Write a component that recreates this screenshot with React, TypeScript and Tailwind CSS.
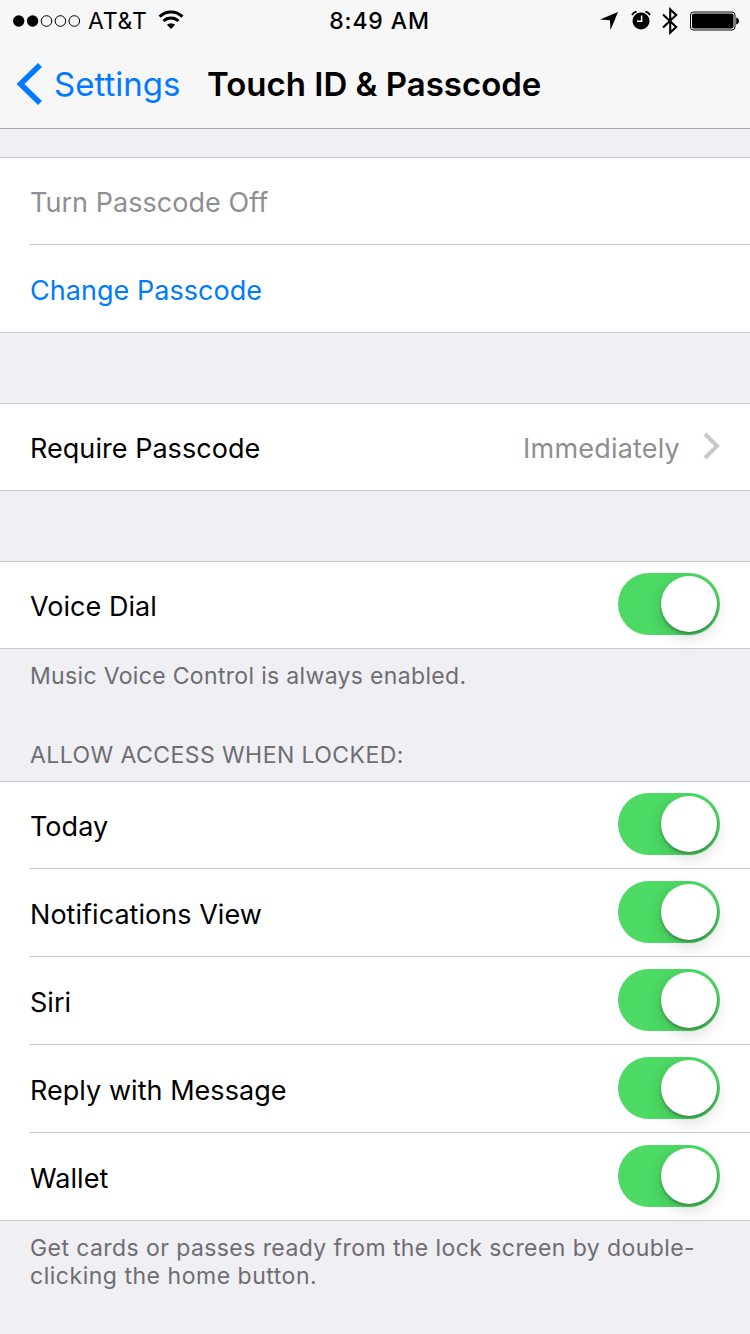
import { useState } from "react";
import type { ReactNode } from "react";
import clsx from "clsx";

const accessItems = ["Today", "Notifications View", "Siri", "Reply with Message", "Wallet"];

function StatusBar() {
  return (
    <div className="flex h-[41px] items-center justify-between text-[23px]">
      <div className="flex flex-1 items-center pl-3">
        <svg width="70" height="14" viewBox="0 0 70 14">
          <circle cx="6.7" cy="7" r="5.7" />
          <circle cx="20.6" cy="7" r="5.7" />
          <g fill="none" stroke="black" strokeWidth="1">
            <circle cx="34.5" cy="7" r="5.3" />
            <circle cx="48.4" cy="7" r="5.3" />
            <circle cx="62.3" cy="7" r="5.3" />
          </g>
        </svg>
        <span className="ml-[6px] w-[70px] pt-[1px] tracking-[0.8px] whitespace-nowrap">AT&amp;T</span>
        <svg className="-mt-[1px]" width="26" height="20" viewBox="0 0 26 20" fill="none" stroke="black">
          <path d="M1.6 6.6a16.2 16.2 0 0 1 22.8 0" strokeWidth="3" />
          <path d="M5.5 11a10.8 10.8 0 0 1 15 0" strokeWidth="2.9" />
          <path d="M13 19l-4.1-4.2a6 6 0 0 1 8.2 0z" fill="black" stroke="none" />
        </svg>
      </div>
      <div className="pt-[1px] pl-[7px] font-medium tracking-[0.9px]">8:49 AM</div>
      <div className="flex flex-1 items-center justify-end pr-[10px]">
        <svg className="mt-[1px]" width="18" height="18" viewBox="0 0 18 18">
          <path d="M18 0L10.5 18L9.9 8.3L0 7.4z" />
        </svg>
        <svg className="-mt-[1px] ml-[13px]" width="20" height="20" viewBox="0 0 20 20">
          <circle cx="10" cy="11" r="8.5" />
          <path d="M1 5.2Q2.5 2 5.6 1.6M19 5.2Q17.5 2 14.4 1.6" fill="none" stroke="black" strokeWidth="1.7" />
          <path d="M10.6 5.5v5.8h-4.6" fill="none" stroke="white" strokeWidth="1.5" />
        </svg>
        <svg className="ml-[11px]" width="16" height="28" viewBox="0 0 16 28" fill="none" stroke="black" strokeWidth="2.1">
          <path d="M1 7.5L14.2 20L8.2 25.5V2.5L14.2 8L1 20.5" />
        </svg>
        <svg className="ml-[12px]" width="50" height="20" viewBox="0 0 50 20">
          <rect x="0.5" y="1" width="44.5" height="18" rx="3" fill="none" stroke="black" strokeWidth="1" />
          <rect x="2" y="2.5" width="41.5" height="15" rx="1.8" />
          <path d="M46.2 6.5a3.6 3.6 0 0 1 0 7z" />
        </svg>
      </div>
    </div>
  );
}

function Switch({ label }: { label: string }) {
  const [on, setOn] = useState(true);

  return (
    <button
      role="switch"
      aria-checked={on}
      aria-label={label}
      onClick={() => setOn(!on)}
      className={clsx(
        "mb-[13px] flex h-[62px] w-[102px] shrink-0 items-center rounded-full p-[3px]",
        on ? "justify-end bg-[#4cd964]" : "justify-start bg-[#e5e5e5]"
      )}
    >
      <span className="size-14 rounded-full bg-white shadow-[0_6px_16px_rgba(0,0,0,0.15),0_2px_3px_rgba(0,0,0,0.3)]" />
    </button>
  );
}

function Group({ children }: { children: ReactNode }) {
  return <div className="border-y border-[#c8c7cc] bg-white">{children}</div>;
}

// Content sits on the bottom edge, so the shorter first row keeps the same baseline
function Row({ children }: { children: ReactNode }) {
  return (
    <div className="group pl-[30px]">
      <div className="flex h-[88px] items-end justify-between border-b border-[#c8c7cc] pr-[30px] leading-[83px] tracking-[0.04px] group-first:h-[87px] group-last:h-[87px] group-last:border-b-0 group-only:h-[86px]">
        {children}
      </div>
    </div>
  );
}

export default function App() {
  return (
    <div className="h-[1334px] w-[750px] overflow-hidden bg-[#efeff4] font-['Inter','Liberation_Sans',sans-serif] text-[27px] text-black">
      <header className="h-[129px] border-b border-[#a7a7aa] bg-[#f7f7f8]">
        <StatusBar />
        <div className="flex h-[87px] items-center pl-4 text-[33px]">
          <button className="flex items-center text-[#007aff]">
            <svg className="-mt-[2px]" width="27" height="42" viewBox="0 0 27 42" fill="none" stroke="currentColor" strokeWidth="5.5">
              <path d="M24 2L4.5 21L24 40" />
            </svg>
            <span className="ml-[11px] w-[126px] text-left whitespace-nowrap">Settings</span>
          </button>
          <h1 className="ml-[27px] font-semibold whitespace-nowrap">Touch ID &amp; Passcode</h1>
        </div>
      </header>

      <main className="pt-7">
        <Group>
          <Row>
            <span className="text-[#8e8e93]">Turn Passcode Off</span>
          </Row>
          <Row>
            <span className="text-[#007aff]">Change Passcode</span>
          </Row>
        </Group>

        <div className="mt-[70px]">
          <Group>
            <Row>
              <span>Require Passcode</span>
              <span className="flex items-center text-[#8e8e93]">
                <span className="tracking-[0.2px]">Immediately</span>
                <svg className="mb-[5px] ml-[23px]" width="17" height="28" viewBox="0 0 17 28" fill="none" stroke="#c7c7cc" strokeWidth="4">
                  <path d="M2 2L14 14L2 26" />
                </svg>
              </span>
            </Row>
          </Group>
        </div>

        <div className="mt-[70px]">
          <Group>
            <Row>
              <span>Voice Dial</span>
              <Switch label="Voice Dial" />
            </Row>
          </Group>
        </div>
        <div className="h-[132px] px-[30px] pt-[13px] text-[23px] leading-7 text-[#6d6d72]">
          <p className="tracking-[0.33px]">Music Voice Control is always enabled.</p>
          <h2 className="mt-[51px] tracking-[0.43px]">ALLOW ACCESS WHEN LOCKED:</h2>
        </div>

        <Group>
          {accessItems.map((item) => (
            <Row key={item}>
              <span>{item}</span>
              <Switch label={item} />
            </Row>
          ))}
        </Group>
        <p className="px-[30px] pt-[13px] text-[23px] leading-7 tracking-[0.42px] text-[#6d6d72]">
          Get cards or passes ready from the lock screen by double-
          <br />
          <span className="tracking-[0.52px]">clicking the home button.</span>
        </p>
      </main>
    </div>
  );
}
